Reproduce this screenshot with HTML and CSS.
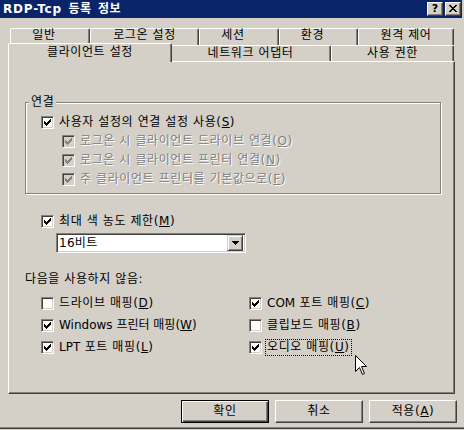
FILE: index.html
```html
<!DOCTYPE html>
<html lang="ko">
<head>
<meta charset="utf-8">
<title>RDP-Tcp 등록 정보</title>
<link rel="stylesheet" href="styles.css">
</head>
<body>
<div class="window">
  <div class="titlebar">
    <span class="title"><span class="lat-title">RDP-Tcp</span> 등록 정보</span>
    <div class="caption-btns">
      <span class="cbtn help">?</span>
      <span class="cbtn close"><svg width="14" height="12" viewBox="0 0 14 12"><path d="M3 2h2v1h-2zM4 3h2v1h-2zM5 4h2v1h-2zM6 5h2v1h-2zM7 6h2v1h-2zM8 7h2v1h-2zM9 8h2v1h-2zM9 2h2v1h-2zM8 3h2v1h-2zM7 4h2v1h-2zM5 6h2v1h-2zM4 7h2v1h-2zM3 8h2v1h-2z" fill="#000"/></svg></span>
    </div>
  </div>

  <div class="content">
    <div class="tabs">
      <div class="tabrow back">
        <div class="tab w80 shift">일반</div>
        <div class="tab w109">로그온 설정</div>
        <div class="tab w80 shift">세션</div>
        <div class="tab w79 shift">환경</div>
        <div class="tab w96">원격 제어</div>
      </div>
      <div class="tabrow front">
        <div class="tab sel">클라이언트 설정</div>
        <div class="tab w161">네트워크 어댑터</div>
        <div class="tab w123">사용 권한</div>
      </div>
    </div>

    <div class="panel">
      <fieldset class="group">
        <legend>연결</legend>
        <div class="row">
          <span class="cb"><svg width="11" height="11" viewBox="0 0 11 11"><path d="M2 4h1v3h-1zM3 5h1v3h-1zM4 6h1v3h-1zM5 5h1v3h-1zM6 4h1v3h-1zM7 3h1v3h-1zM8 2h1v3h-1z"/></svg></span>
          <span>사용자 설정의 연결 설정 사용(<u>S</u>)</span>
        </div>
        <div class="row sub">
          <span class="cb dis"><svg width="11" height="11" viewBox="0 0 11 11"><path d="M2 4h1v3h-1zM3 5h1v3h-1zM4 6h1v3h-1zM5 5h1v3h-1zM6 4h1v3h-1zM7 3h1v3h-1zM8 2h1v3h-1z"/></svg></span>
          <span class="dis-text">로그온 시 클라이언트 드라이브 연결(<u>O</u>)</span>
        </div>
        <div class="row sub">
          <span class="cb dis"><svg width="11" height="11" viewBox="0 0 11 11"><path d="M2 4h1v3h-1zM3 5h1v3h-1zM4 6h1v3h-1zM5 5h1v3h-1zM6 4h1v3h-1zM7 3h1v3h-1zM8 2h1v3h-1z"/></svg></span>
          <span class="dis-text">로그온 시 클라이언트 프린터 연결(<u>N</u>)</span>
        </div>
        <div class="row sub">
          <span class="cb dis"><svg width="11" height="11" viewBox="0 0 11 11"><path d="M2 4h1v3h-1zM3 5h1v3h-1zM4 6h1v3h-1zM5 5h1v3h-1zM6 4h1v3h-1zM7 3h1v3h-1zM8 2h1v3h-1z"/></svg></span>
          <span class="dis-text">주 클라이언트 프린터를 기본값으로(<u>F</u>)</span>
        </div>
      </fieldset>

      <div class="row depth">
        <span class="cb"><svg width="11" height="11" viewBox="0 0 11 11"><path d="M2 4h1v3h-1zM3 5h1v3h-1zM4 6h1v3h-1zM5 5h1v3h-1zM6 4h1v3h-1zM7 3h1v3h-1zM8 2h1v3h-1z"/></svg></span>
        <span>최대 색 농도 제한(<u>M</u>)</span>
      </div>

      <div class="select">
        <span class="value">16비트</span>
        <span class="dd"><svg width="7" height="4" viewBox="0 0 7 4"><path d="M0 0h7v1h-7zM1 1h5v1h-5zM2 2h3v1h-3zM3 3h1v1h-1z"/></svg></span>
      </div>

      <div class="caption">다음을 사용하지 않음:</div>

      <div class="grid">
        <div class="row g">
          <span class="cb"></span>
          <span>드라이브 매핑(<u>D</u>)</span>
        </div>
        <div class="row g">
          <span class="cb"><svg width="11" height="11" viewBox="0 0 11 11"><path d="M2 4h1v3h-1zM3 5h1v3h-1zM4 6h1v3h-1zM5 5h1v3h-1zM6 4h1v3h-1zM7 3h1v3h-1zM8 2h1v3h-1z"/></svg></span>
          <span><span class="lat">COM</span> 포트 매핑(<u>C</u>)</span>
        </div>
        <div class="row g">
          <span class="cb"><svg width="11" height="11" viewBox="0 0 11 11"><path d="M2 4h1v3h-1zM3 5h1v3h-1zM4 6h1v3h-1zM5 5h1v3h-1zM6 4h1v3h-1zM7 3h1v3h-1zM8 2h1v3h-1z"/></svg></span>
          <span class="tight">Windows 프린터 매핑(<u>W</u>)</span>
        </div>
        <div class="row g">
          <span class="cb"></span>
          <span>클립보드 매핑(<u>B</u>)</span>
        </div>
        <div class="row g">
          <span class="cb"><svg width="11" height="11" viewBox="0 0 11 11"><path d="M2 4h1v3h-1zM3 5h1v3h-1zM4 6h1v3h-1zM5 5h1v3h-1zM6 4h1v3h-1zM7 3h1v3h-1zM8 2h1v3h-1z"/></svg></span>
          <span><span class="lat">LPT</span> 포트 매핑(<u>L</u>)</span>
        </div>
        <div class="row g">
          <span class="cb"><svg width="11" height="11" viewBox="0 0 11 11"><path d="M2 4h1v3h-1zM3 5h1v3h-1zM4 6h1v3h-1zM5 5h1v3h-1zM6 4h1v3h-1zM7 3h1v3h-1zM8 2h1v3h-1z"/></svg></span>
          <span class="focus">오디오 매핑(<u>U</u>)</span>
        </div>
      </div>
    </div>

    <div class="buttons">
      <span class="btn default">확인</span>
      <span class="btn">취소</span>
      <span class="btn">적용(<u>A</u>)</span>
    </div>
  </div>

  <svg class="cursor" width="13" height="21" viewBox="0 0 13 21"><path d="M0.5 0.5V16.5L4.5 12.5L7.5 19.5L9.5 18.5L6.5 11.5H11.5Z" fill="#fff" stroke="#000" stroke-width="1"/></svg>
</div>
</body>
</html>
```

FILE: styles.css
```css
* { box-sizing: border-box; }
html, body { margin: 0; padding: 0; }
body {
  width: 464px;
  height: 430px;
  overflow: hidden;
  background: #d4d0c8;
  font-family: "DejaVu Sans", "Noto Sans CJK KR", sans-serif;
  font-size: 12px;
  letter-spacing: 0.6px;
  color: #000;
}
u { text-decoration: underline; text-underline-offset: 1px; }
.lat { letter-spacing: 0; }
.tight { letter-spacing: 0; }

.window {
  position: relative;
  width: 464px;
  height: 429px;
  display: flex;
  flex-direction: column;
  border-bottom: 1px solid #404040;
  box-shadow: inset 0 -1px #808080;
}

.titlebar {
  flex: none;
  width: 462px;
  height: 18px;
  background: #0a246a;
  display: flex;
  align-items: center;
  justify-content: space-between;
  padding: 0 1px 0 3px;
}
.title {
  color: #fff;
  font-weight: bold;
  font-size: 12px;
  line-height: 14px;
  letter-spacing: 0.4px;
  word-spacing: 2px;
  white-space: nowrap;
}
.lat-title { letter-spacing: 0.8px; }
.caption-btns { display: flex; gap: 2px; }
.cbtn {
  width: 16px;
  height: 14px;
  background: #d4d0c8;
  border: 1px solid;
  border-color: #fff #404040 #404040 #fff;
  box-shadow: inset -1px -1px #808080;
  display: flex;
  align-items: center;
  justify-content: center;
  letter-spacing: 0;
}
.cbtn.help {
  font-family: "DejaVu Sans", sans-serif;
  font-weight: bold;
  font-size: 11px;
  line-height: 12px;
}
.cbtn svg { display: block; }

.content {
  flex: 1;
  display: flex;
  flex-direction: column;
  padding: 10px 9px 0 8px;
}

.tabs { flex: none; }
.tabrow { display: flex; padding-left: 2px; }
.tabrow.back { height: 17px; }
.tabrow.front { height: 16px; align-items: flex-end; position: relative; z-index: 2; }

.tab {
  flex: none;
  height: 100%;
  background: #d4d0c8;
  border: 1px solid;
  border-bottom: none;
  border-color: #fff #404040 #fff #fff;
  box-shadow: inset -1px 0 #808080;
  border-radius: 2px 2px 0 0;
  text-align: center;
  white-space: nowrap;
  line-height: 13px;
}
.tabrow.front .tab { line-height: 14px; }
.tab.shift { padding-right: 12px; }
.w79 { width: 79px; }
.w80 { width: 80px; }
.w96 { width: 96px; }
.w109 { width: 109px; }
.w123 { width: 123px; }
.w161 { width: 161px; }
.tab.sel {
  width: 164px;
  height: 19px;
  margin: 0 -2px -1px;
  position: relative;
  z-index: 1;
  padding-top: 1px;
}

.panel {
  flex: none;
  height: 333px;
  border: 1px solid;
  border-color: #fff #404040 #404040 #fff;
  box-shadow: inset -1px -1px #808080;
  padding: 34px 12px 0 16px;
  display: flex;
  flex-direction: column;
}

.group {
  margin: 0;
  width: 416px;
  min-width: 0;
  padding: 5px 0 4px 15px;
  border: 1px solid #808080;
  box-shadow: 1px 1px 0 #fff, inset 1px 1px 0 #fff;
}
.group legend {
  padding: 0 2px;
  margin-left: -12px;
  line-height: 12px;
  background: #d4d0c8;
}

.row {
  display: flex;
  align-items: center;
  height: 19px;
  line-height: 15px;
  white-space: nowrap;
}
.row.sub { padding-left: 21px; }
.row.depth { margin-top: 18px; padding-left: 16px; }
.row.g { height: 22px; }

.cb {
  flex: none;
  width: 13px;
  height: 13px;
  margin-right: 5px;
  background: #fff;
  border: 1px solid;
  border-color: #808080 #fff #fff #808080;
  box-shadow: inset 1px 1px #404040, inset -1px -1px #d4d0c8;
}
.cb svg { display: block; fill: #000; }
.cb.dis { background: #d4d0c8; }
.cb.dis svg { fill: #808080; }
.dis-text { color: #808080; text-shadow: 1px 1px 0 #fff; }

.select {
  margin: 2px 0 0 31px;
  width: 190px;
  height: 20px;
  display: flex;
  align-items: center;
  background: #fff;
  border: 1px solid;
  border-color: #808080 #fff #fff #808080;
  box-shadow: inset 1px 1px #404040, inset -1px -1px #d4d0c8;
  padding: 2px;
}
.select .value { flex: 1; line-height: 14px; padding-left: 0; letter-spacing: 0.3px; }
.dd {
  flex: none;
  width: 16px;
  height: 16px;
  background: #d4d0c8;
  border: 1px solid;
  border-color: #d4d0c8 #404040 #404040 #d4d0c8;
  box-shadow: inset 1px 1px #fff, inset -1px -1px #808080;
  display: flex;
  align-items: center;
  justify-content: center;
}
.dd svg { display: block; fill: #000; }

.caption { margin-top: 19px; line-height: 14px; }

.grid {
  margin-top: 6px;
  padding-left: 16px;
  display: grid;
  grid-template-columns: 208px 1fr;
}
.focus {
  margin-left: -2px;
  padding: 0 1px;
  border: 1px dotted #000;
  line-height: 15px;
}

.buttons {
  display: flex;
  justify-content: flex-end;
  gap: 6px;
  margin: 6px -2px 0 0;
}
.btn {
  width: 88px;
  height: 23px;
  border: 1px solid;
  border-color: #fff #404040 #404040 #fff;
  box-shadow: inset -1px -1px #808080;
  display: flex;
  align-items: center;
  justify-content: center;
  line-height: 15px;
}
.btn.default {
  border-color: #000;
  box-shadow: inset 1px 1px #fff, inset -1px -1px #404040, inset -2px -2px #808080;
}

.cursor {
  position: absolute;
  left: 355px;
  top: 355px;
  display: block;
}
```
